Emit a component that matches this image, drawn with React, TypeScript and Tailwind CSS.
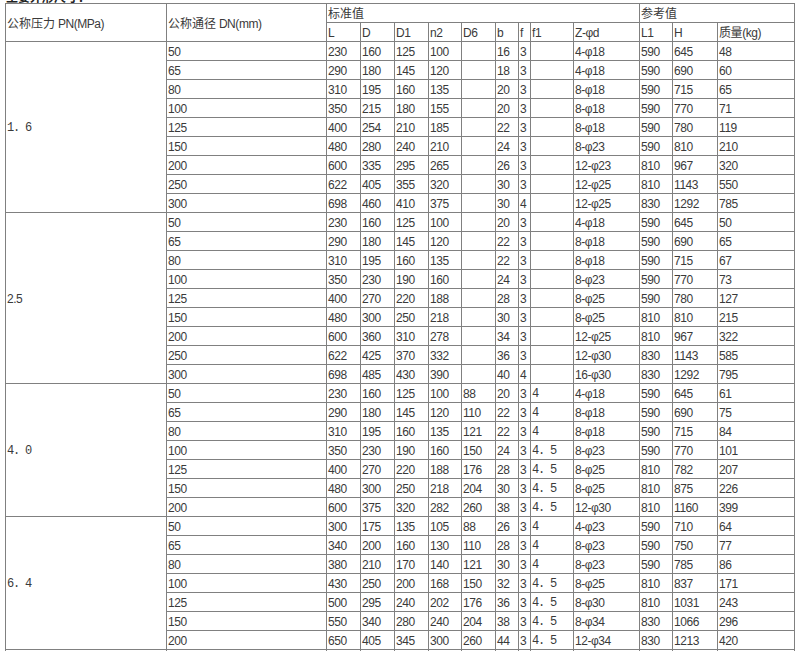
import React from 'react';

type Group = { pn: string; mono: boolean; rows: string[] };

const groups: Group[] = [
  {
    pn: '1. 6',
    mono: true,
    rows: [
      '50 230 160 125 100 - 16 3 - 4-φ18 590 645 48',
      '65 290 180 145 120 - 18 3 - 4-φ18 590 690 60',
      '80 310 195 160 135 - 20 3 - 8-φ18 590 715 65',
      '100 350 215 180 155 - 20 3 - 8-φ18 590 770 71',
      '125 400 254 210 185 - 22 3 - 8-φ18 590 780 119',
      '150 480 280 240 210 - 24 3 - 8-φ23 590 810 210',
      '200 600 335 295 265 - 26 3 - 12-φ23 810 967 320',
      '250 622 405 355 320 - 30 3 - 12-φ25 810 1143 550',
      '300 698 460 410 375 - 30 4 - 12-φ25 830 1292 785',
    ],
  },
  {
    pn: '2.5',
    mono: false,
    rows: [
      '50 230 160 125 100 - 20 3 - 4-φ18 590 645 50',
      '65 290 180 145 120 - 22 3 - 8-φ18 590 690 65',
      '80 310 195 160 135 - 22 3 - 8-φ18 590 715 67',
      '100 350 230 190 160 - 24 3 - 8-φ23 590 770 73',
      '125 400 270 220 188 - 28 3 - 8-φ25 590 780 127',
      '150 480 300 250 218 - 30 3 - 8-φ25 810 810 215',
      '200 600 360 310 278 - 34 3 - 12-φ25 810 967 322',
      '250 622 425 370 332 - 36 3 - 12-φ30 830 1143 585',
      '300 698 485 430 390 - 40 4 - 16-φ30 830 1292 795',
    ],
  },
  {
    pn: '4. 0',
    mono: true,
    rows: [
      '50 230 160 125 100 88 20 3 4 4-φ18 590 645 61',
      '65 290 180 145 120 110 22 3 4 8-φ18 590 690 75',
      '80 310 195 160 135 121 22 3 4 8-φ18 590 715 84',
      '100 350 230 190 160 150 24 3 4.5 8-φ23 590 770 101',
      '125 400 270 220 188 176 28 3 4.5 8-φ25 810 782 207',
      '150 480 300 250 218 204 30 3 4.5 8-φ25 810 875 226',
      '200 600 375 320 282 260 38 3 4.5 12-φ30 810 1160 399',
    ],
  },
  {
    pn: '6. 4',
    mono: true,
    rows: [
      '50 300 175 135 105 88 26 3 4 4-φ23 590 710 64',
      '65 340 200 160 130 110 28 3 4 8-φ23 590 750 77',
      '80 380 210 170 140 121 30 3 4 8-φ23 590 785 86',
      '100 430 250 200 168 150 32 3 4.5 8-φ25 810 837 171',
      '125 500 295 240 202 176 36 3 4.5 8-φ30 810 1031 243',
      '150 550 340 280 240 204 38 3 4.5 8-φ34 830 1066 296',
      '200 650 405 345 300 260 44 3 4.5 12-φ34 830 1213 420',
    ],
  },
];

const widths = [161, 160, 34, 34, 34, 33, 34, 23, 12, 43, 66, 33, 45, 77];
const subHeads = ['L', 'D', 'D1', 'n2', 'D6', 'b', 'f', 'f1', 'Z-φd', 'L1', 'H', '质量(kg)'];

const cell = 'h-[19px] border border-[#808080] p-0 pl-px pt-[3px] text-left align-middle font-normal whitespace-nowrap overflow-hidden';
const mono = "font-['Liberation_Mono',monospace] tracking-[-1.2px]";

export default function App() {
  return (
    <div className="h-[651px] w-[800px] overflow-hidden bg-white pl-[5px] font-['Liberation_Sans','Noto_Sans_CJK_SC',sans-serif] text-[12px] leading-[15px] tracking-[-0.45px] text-[#3a3a3a]">
      <div className="flex h-[3px] items-end overflow-hidden pl-px font-['Noto_Sans_CJK_SC',sans-serif] font-bold tracking-normal text-[#222]">
        <span className="shrink-0 leading-[12px]">主要外形尺寸：</span>
      </div>
      <table className="w-[790px] table-fixed border-collapse">
        <colgroup>
          {widths.map((w, i) => (
            <col key={i} style={{ width: w }} />
          ))}
        </colgroup>
        <thead>
          <tr>
            <th rowSpan={2} className={cell}>
              <span className="tracking-normal">公称压力</span> PN(MPa)
            </th>
            <th rowSpan={2} className={cell}>
              <span className="tracking-normal">公称通径</span> DN(mm)
            </th>
            <th colSpan={9} className={`${cell} tracking-normal`}>标准值</th>
            <th colSpan={3} className={`${cell} tracking-normal`}>参考值</th>
          </tr>
          <tr>
            {subHeads.map((h) => (
              <th key={h} className={cell}>{h}</th>
            ))}
          </tr>
        </thead>
        <tbody>
          {groups.map((g) =>
            g.rows.map((row, i) => (
              <tr key={g.pn + i}>
                {i === 0 && (
                  <td rowSpan={g.rows.length} className={`${cell} ${g.mono ? mono : ''}`}>
                    {g.pn}
                  </td>
                )}
                {row.split(' ').map((v, j) => (
                  <td key={j} className={`${cell} ${j === 8 ? mono : ''}`}>
                    {v === '-' ? '' : v === '4.5' ? '4. 5' : v}
                  </td>
                ))}
              </tr>
            ))
          )}
          <tr>
            {Array.from({ length: 14 }, (_, i) => (
              <td key={i} className={cell} />
            ))}
          </tr>
        </tbody>
      </table>
    </div>
  );
}
